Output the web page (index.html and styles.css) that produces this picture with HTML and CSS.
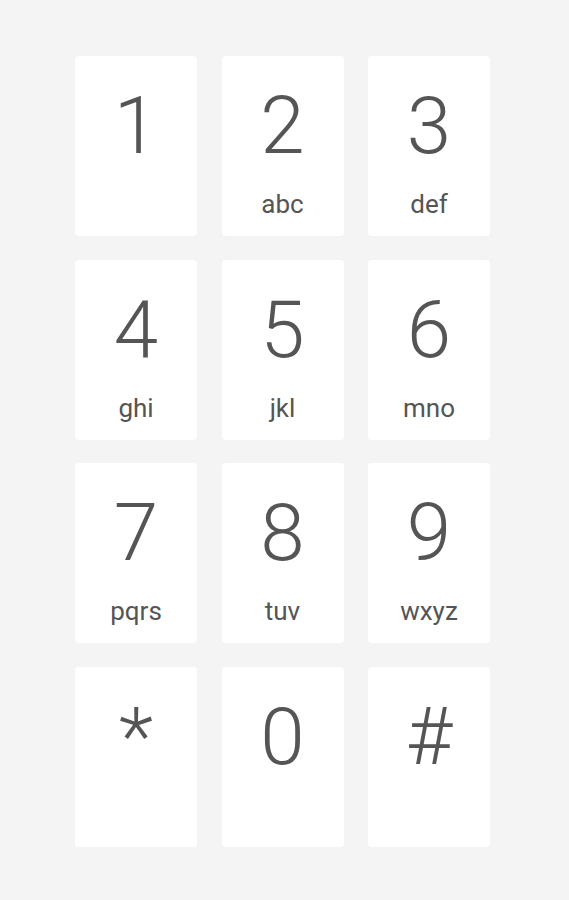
FILE: index.html
```html
<!DOCTYPE html>
<html>
<head>
<meta charset="utf-8">
<link rel="stylesheet" href="styles.css">
</head>
<body>
<div class="pad">
  <div class="key"><span class="digit">1</span></div>
  <div class="key"><span class="digit">2</span><span class="letters">abc</span></div>
  <div class="key"><span class="digit">3</span><span class="letters">def</span></div>
  <div class="key"><span class="digit">4</span><span class="letters">ghi</span></div>
  <div class="key"><span class="digit">5</span><span class="letters">jkl</span></div>
  <div class="key"><span class="digit">6</span><span class="letters">mno</span></div>
  <div class="key"><span class="digit">7</span><span class="letters">pqrs</span></div>
  <div class="key"><span class="digit">8</span><span class="letters">tuv</span></div>
  <div class="key"><span class="digit">9</span><span class="letters">wxyz</span></div>
  <div class="key"><span class="digit">*</span></div>
  <div class="key"><span class="digit">0</span></div>
  <div class="key"><span class="digit">#</span></div>
</div>
</body>
</html>
```
FILE: styles.css
```css
html, body {
  margin: 0;
  padding: 0;
  background: #f4f4f4;
  height: 100%;
}
body {
  font-family: Roboto, "Liberation Sans", sans-serif;
  color: #555555;
}
.pad {
  display: grid;
  width: 415px;
  grid-template-columns: repeat(3, 1fr);
  grid-auto-rows: 180px;
  column-gap: 24.5px;
  row-gap: 23.7px;
  margin: 56px 0 0 75px;
}
.key {
  background: #ffffff;
  border-radius: 4px;
  display: flex;
  flex-direction: column;
  align-items: center;
  padding-top: 30px;
  box-sizing: border-box;
}
.digit {
  font-size: 80px;
  line-height: 80px;
  font-weight: 300;
}
.letters {
  font-size: 26px;
  line-height: 26px;
  font-weight: 400;
  margin-top: 25px;
}
```
